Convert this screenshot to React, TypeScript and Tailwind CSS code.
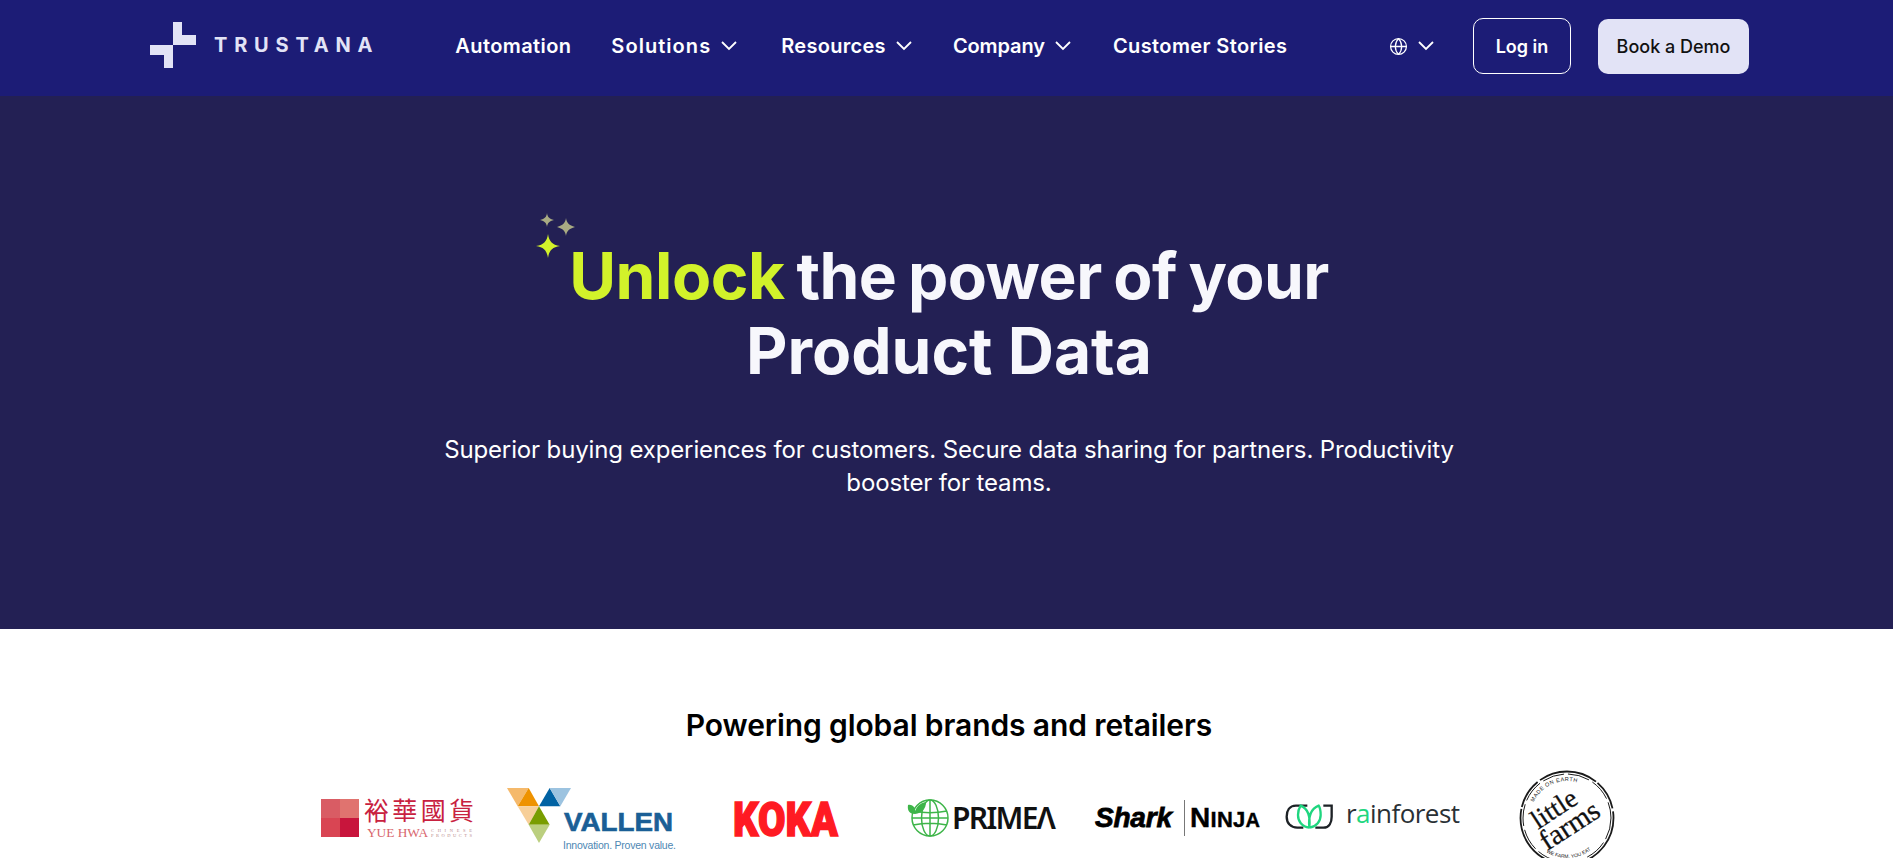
import React from "react";
import { Globe } from "lucide-react";

const Chevron: React.FC<{ className?: string }> = ({ className }) => (
  <svg className={className} width="16" height="10" viewBox="0 0 16 10" fill="none" stroke="currentColor" strokeWidth="1.8">
    <path d="M1 1l7 7 7-7" />
  </svg>
);

const NavItem: React.FC<{ label: string; hasMenu?: boolean; className?: string }> = ({ label, hasMenu, className }) => (
  <a className={`flex items-center gap-[10px] text-[20px] font-semibold text-white cursor-pointer ${className ?? ""}`}>
    {label}
    {hasMenu && <Chevron />}
  </a>
);

const Logo = () => (
  <a className="flex items-center gap-[18px] mb-[2px]">
    <svg width="46" height="46" viewBox="0 0 46 46" fill="#e2e3f6">
      <path d="M23 0h9v13h14v10H23zM0 23h23v23h-9V33H0z" />
    </svg>
    <span className="text-[20px] font-bold tracking-[0.34em] text-[#e2e3f6]">TRUSTANA</span>
  </a>
);

const Sparkles = () => (
  <svg className="absolute left-[-34px] top-[-25px]" width="42" height="48" viewBox="0 0 42 48">
    <path d="M13 22c1 7 4 11 12 12-8 1-11 5-12 12-1-7-4-11-12-12 8-1 11-5 12-12z" fill="#d2f22a" />
    <path d="M31 6c.7 5 3 7.400 9 9-6 1.600-8.300 4-9 9-.7-5-3-7.400-9-9 6-1.600 8.300-4 9-9z" fill="#a9ab83" />
    <path d="M12 1c.5 4 2.200 5.800 7 7-4.800 1.200-6.500 3-7 7-.5-4-2.200-5.800-7-7 4.800-1.200 6.500-3 7-7z" fill="#a9ab83" />
  </svg>
);

const YueHwa = () => (
  <svg className="overflow-visible" width="153" height="40" viewBox="0 0 153 40">
    <rect x="0" y="1" width="19" height="19" fill="#d95c64" />
    <rect x="19" y="1" width="19" height="19" fill="#e0736f" />
    <rect x="0" y="20" width="19" height="19" fill="#d94553" />
    <rect x="19" y="20" width="19" height="19" fill="#c8153c" />
    <text x="43" y="22" fontSize="25" textLength="110" fill="#c8213f" fontFamily="'Noto Sans CJK TC', sans-serif">裕華國貨</text>
    <text x="46" y="38.500" fontSize="12" textLength="61" lengthAdjust="spacingAndGlyphs" fill="#d8646c" fontFamily="'Liberation Serif', serif">YUE HWA</text>
    <text x="110" y="33.500" fontSize="4.500" textLength="41" fill="#b98a8c" fontFamily="'Liberation Serif', serif">CHINESE</text>
    <text x="110" y="38.500" fontSize="4.500" textLength="41" fill="#b98a8c" fontFamily="'Liberation Serif', serif">PRODUCTS</text>
  </svg>
);

const Vallen = () => (
  <svg className="overflow-visible" width="170" height="64" viewBox="0 0 170 64">
    <g transform="scale(0.3333) translate(-590 -53)">
      <path d="M590 53h65l-33 55z" fill="#f5b96b" />
      <path d="M622 108h64l-31-55z" fill="#ee9200" />
      <path d="M686 108h64l-32-55z" fill="#0062a3" />
      <path d="M718 53h64l-32 55z" fill="#9cc3e0" />
      <path d="M622 108h64l-31 55z" fill="#f7cf98" />
      <path d="M655 163h63l-32-55z" fill="#799d00" />
      <path d="M655 163h63l-32 55z" fill="#bbcf7f" />
    </g>
    <text x="57" y="43" fontSize="26" fontWeight="700" textLength="109" lengthAdjust="spacingAndGlyphs" stroke="#1a5f96" strokeWidth="0.600" fill="#1a5f96" fontFamily="'Liberation Sans', sans-serif">VALLEN</text>
    <text x="56" y="61" fontSize="10.500" textLength="113" fill="#4d87b3" fontFamily="'Liberation Sans', sans-serif">Innovation. Proven value.</text>
  </svg>
);

const Koka = () => (
  <svg className="overflow-visible" width="108" height="52" viewBox="0 0 108 52">
    <text x="1" y="44" fontSize="48" fontWeight="900" textLength="105" lengthAdjust="spacingAndGlyphs" stroke="#ff1a23" strokeWidth="1.500" fill="#ff1a23" fontFamily="Roboto, sans-serif">KOKA</text>
  </svg>
);

const Primea = () => (
  <svg className="overflow-visible" width="149" height="44" viewBox="0 0 149 44">
    <g fill="none" stroke="#3eb549" strokeWidth="1.500">
      <circle cx="23" cy="22" r="18" />
      <ellipse cx="23" cy="22" rx="8.500" ry="18" />
      <path d="M23 4v36M6 15c10 2 24 2 34 0M6 29c10-2 24-2 34 0M5 22h36" />
    </g>
    <path d="M1 9c5-1 8 3 7 9-5 0-8-3-7-9zM8 18c0-7 5-11 11-12 0 7-4 11-11 12z" fill="#3eb549" />
    <text x="45" y="33" fontSize="30" fontWeight="600" textLength="104" fill="#111" fontFamily="'Noto Sans', sans-serif">PRIMEΛ</text>
  </svg>
);

const SharkNinja = () => (
  <svg className="overflow-visible" width="165" height="40" viewBox="0 0 165 40">
    <text x="0" y="29" fontSize="28" fontWeight="700" fontStyle="italic" textLength="77" stroke="#000" strokeWidth="0.800" fill="#000" fontFamily="'Liberation Sans', sans-serif">Shark</text>
    <rect x="89" y="2" width="1" height="36" fill="#777" />
    <text x="95" y="29" fontWeight="700" textLength="70" stroke="#000" strokeWidth="0.400" fill="#000" fontFamily="'Liberation Sans', sans-serif">
      <tspan fontSize="28">N</tspan>
      <tspan fontSize="22">INJ</tspan>
      <tspan fontSize="20">A</tspan>
    </text>
  </svg>
);

const Rainforest = () => (
  <svg className="overflow-visible" width="174" height="34" viewBox="0 0 174 34">
    <g transform="scale(0.3333) translate(-48 -18)" fill="none" strokeWidth="7">
      <path d="M112 32H78C58 32 50 48 50 65C50 84 62 98 82 98H100M136 98H160C178 98 185 82 185 65V32H160" stroke="#1d2226" />
      <path d="M118 98C95 95 84 78 84 60C84 48 88 38 92 32C112 40 122 60 118 98M118 98C140 95 152 78 152 60C152 48 150 38 146 32C126 40 114 60 118 98" stroke="#1fd67f" />
    </g>
    <text x="60" y="22" fontSize="26" textLength="114" fill="#2a3035" fontFamily="'Open Sans', sans-serif">
      r<tspan fill="#1fd67f">a</tspan>inforest
    </text>
  </svg>
);

const LittleFarms = () => (
  <svg width="96" height="96" viewBox="0 0 96 96">
    <defs>
      <path id="ring-top" d="M11 48a37 37 0 0 1 74 0" />
      <path id="ring-bottom" d="M18 74a39 39 0 0 0 60 0" />
    </defs>
    <circle cx="48" cy="48" r="46.500" fill="none" stroke="#1a1a1a" strokeWidth="1.800" strokeDasharray="60 2 30 3" />
    <circle cx="48" cy="48" r="44" fill="none" stroke="#1a1a1a" strokeWidth="1" strokeDasharray="22 4" />
    <text fontSize="5.500" fill="#222" letterSpacing="0.5" fontFamily="'Liberation Sans', sans-serif">
      <textPath href="#ring-top" startOffset="14%">MADE ON EARTH</textPath>
    </text>
    <text fontSize="5" fill="#222" fontFamily="'Liberation Sans', sans-serif">
      <textPath href="#ring-bottom" startOffset="18%">WE FARM, YOU EAT</textPath>
    </text>
    <g transform="rotate(-33 48 48)" fontFamily="'Liberation Serif', serif" fill="#111" stroke="#111" strokeWidth="0.300" textAnchor="middle">
      <text x="42" y="42" fontSize="27">little</text>
      <text x="46" y="65" fontSize="29">farms</text>
    </g>
  </svg>
);

export default function App() {
  return (
    <div className="h-[858px] overflow-hidden bg-white font-['Inter',sans-serif]">
      {/* nav */}
      <nav className="flex items-center h-24 bg-[#1c1c76] pl-[150px] pr-[144px] pb-1">
        <Logo />
        <div className="flex items-center gap-[40px] ml-[76px]">
          <NavItem label="Automation" className="tracking-[0.4px]" />
          <NavItem label="Solutions" hasMenu className="tracking-[1.05px] mr-[4px]" />
          <NavItem label="Resources" hasMenu className="tracking-[0.3px] mr-[1px]" />
          <NavItem label="Company" hasMenu className="tracking-[-0.1px] mr-[2px]" />
          <NavItem label="Customer Stories" className="tracking-[0.4px]" />
        </div>
        <div className="flex items-center ml-auto">
          <Globe className="w-[19px] h-[19px] text-white" strokeWidth={1.6} />
          <Chevron className="ml-[10px] text-white" />
          <button className="w-[98px] h-[56px] ml-[39px] rounded-[10px] border border-white text-[18px] font-semibold text-white">
            Log in
          </button>
          <button className="w-[151px] h-[55px] ml-[27px] rounded-[10px] bg-[#e2e3f6] text-[18px] font-medium text-[#111]">
            Book a Demo
          </button>
        </div>
      </nav>

      {/* hero */}
      <section className="flex flex-col items-center h-[533px] pt-[142px] pl-[5px] bg-[#232054]">
        <h1 className="text-center text-[64px] leading-[75px] font-bold text-[#f7f7fc]">
          <span className="[word-spacing:-3px] tracking-[-0.55px]">
            <span className="relative text-[#d2f22a] tracking-[-0.4px]">
              <Sparkles />
              Unlock
            </span>{" "}
            the power of your
          </span>
          <br />
          Product Data
        </h1>
        <p className="mt-[45px] w-[1040px] text-center text-[24px] leading-[33px] tracking-[-0.14px] text-white">
          Superior buying experiences for customers. Secure data sharing for partners. Productivity booster for teams.
        </p>
      </section>

      {/* brands */}
      <section className="flex flex-col items-center pt-[76px] pl-[5px]">
        <h2 className="text-[30px] leading-[40px] font-semibold tracking-[-0.1px] text-black">Powering global brands and retailers</h2>
        <div className="flex items-center mt-[25px] ml-[38px]">
          <YueHwa />
          <div className="ml-[33px] mt-[3px]"><Vallen /></div>
          <div className="ml-[55px]"><Koka /></div>
          <div className="ml-[67px]"><Primea /></div>
          <div className="ml-[39px]"><SharkNinja /></div>
          <div className="ml-[26px]"><Rainforest /></div>
          <div className="ml-[59px]"><LittleFarms /></div>
        </div>
      </section>
    </div>
  );
}
